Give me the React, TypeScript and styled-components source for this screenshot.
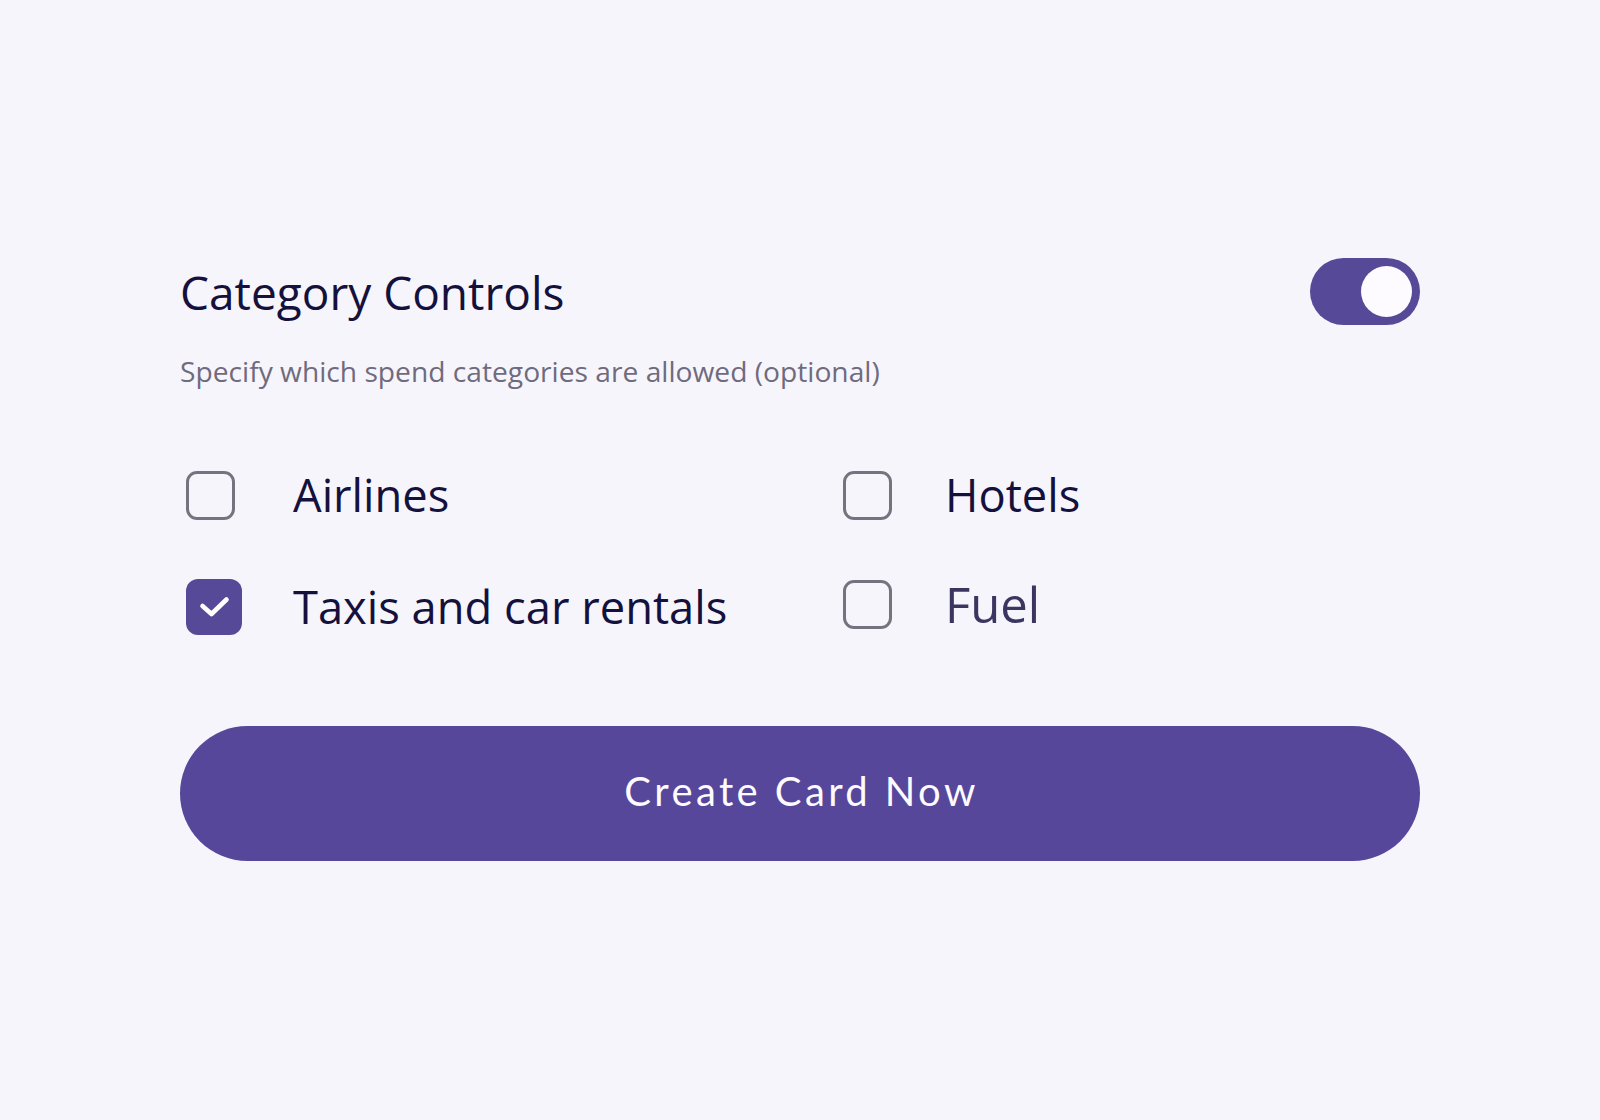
import React, { useState } from "react";
import styled, { createGlobalStyle } from "styled-components";

const GlobalStyle = createGlobalStyle`
  html, body {
    margin: 0;
    padding: 0;
    background: #f7f5fc;
  }
  body {
    font-family: "Open Sans", "Noto Sans", sans-serif;
    -webkit-font-smoothing: antialiased;
  }
  * { box-sizing: border-box; }
`;

const Page = styled.div`
  width: 1600px;
  height: 1120px;
  background: #f7f5fc;
`;

const Panel = styled.main`
  width: 1240px;
  margin: 0 auto;
  padding-top: 258px;
  display: flex;
  flex-direction: column;
`;

const Header = styled.div`
  display: flex;
  align-items: center;
  justify-content: space-between;
  height: 67px;
`;

const Title = styled.h1`
  margin: 0;
  font-family: "Open Sans", sans-serif;
  font-weight: 400;
  font-size: 46px;
  line-height: 62px;
  color: #15113d;
`;

const Toggle = styled.button<{ $on: boolean }>`
  width: 110px;
  height: 67px;
  border: none;
  border-radius: 34px;
  padding: 8px;
  background: ${(p) => (p.$on ? "#564a98" : "#c9c5d6")};
  display: flex;
  align-items: center;
  justify-content: ${(p) => (p.$on ? "flex-end" : "flex-start")};
  cursor: pointer;
`;

const Knob = styled.span`
  width: 51px;
  height: 51px;
  border-radius: 50%;
  background: #fdfbff;
`;

const Subtitle = styled.p`
  margin: 27px 0 0;
  font-family: "Open Sans", sans-serif;
  font-size: 28.2px;
  line-height: 38px;
  color: #6f6b7e;
`;

const Options = styled.div`
  margin-top: 74px;
  padding-left: 6px;
  display: grid;
  grid-template-columns: 657px 1fr;
  row-gap: 50px;
`;

const Option = styled.label<{ $gap: number; $lift: number }>`
  display: grid;
  grid-template-columns: 56px auto;
  column-gap: ${(p) => p.$gap}px;
  align-items: center;
  justify-items: start;
  height: 62px;
  margin-top: ${(p) => -p.$lift}px;
  cursor: pointer;
`;

const Box = styled.span<{ $checked: boolean }>`
  width: ${(p) => (p.$checked ? 56 : 49)}px;
  height: ${(p) => (p.$checked ? 56 : 49)}px;
  border-radius: ${(p) => (p.$checked ? 12 : 11)}px;
  border: ${(p) => (p.$checked ? "none" : "3px solid #77727f")};
  background: ${(p) => (p.$checked ? "#564a98" : "transparent")};
  display: flex;
  align-items: center;
  justify-content: center;
`;

const Label = styled.span<{ $muted?: boolean }>`
  font-family: "Open Sans", sans-serif;
  font-size: ${(p) => (p.$muted ? 49 : 45.3)}px;
  line-height: 62px;
  color: ${(p) => (p.$muted ? "#3b3660" : "#15113d")};
  white-space: nowrap;
`;

const CreateButton = styled.button`
  margin-top: 88px;
  width: 1240px;
  height: 135px;
  border: none;
  border-radius: 68px;
  background: #56479a;
  color: #fdfbff;
  font-family: "Lato", sans-serif;
  font-weight: 400;
  font-size: 40px;
  letter-spacing: 3.4px;
  padding: 0 0 6px 3px;
  cursor: pointer;
`;

const Check = () => (
  <svg width="56" height="56" viewBox="0 0 56 56" fill="none">
    <polyline
      points="16.5,27 25.5,35 40.5,20.5"
      stroke="#ffffff"
      strokeWidth="4.6"
      strokeLinecap="round"
      strokeLinejoin="round"
    />
  </svg>
);

type Item = { label: string; checked: boolean; gap: number; lift: number; muted?: boolean };

const items: Item[] = [
  { label: "Airlines", checked: false, gap: 51, lift: 0 },
  { label: "Hotels", checked: false, gap: 46, lift: 0 },
  { label: "Taxis and car rentals", checked: true, gap: 51, lift: 0 },
  { label: "Fuel", checked: false, gap: 46, lift: 3, muted: true },
];

export default function App() {
  const [on, setOn] = useState(true);
  const [checked, setChecked] = useState(items.map((i) => i.checked));
  return (
    <Page>
      <GlobalStyle />
      <Panel>
        <Header>
          <Title>Category Controls</Title>
          <Toggle $on={on} onClick={() => setOn(!on)} aria-label="Toggle category controls">
            <Knob />
          </Toggle>
        </Header>
        <Subtitle>Specify which spend categories are allowed (optional)</Subtitle>
        <Options>
          {items.map((it, i) => (
            <Option
              key={it.label}
              $gap={it.gap}
              $lift={it.lift}
              onClick={() => setChecked(checked.map((c, j) => (j === i ? !c : c)))}
            >
              <Box $checked={checked[i]}>{checked[i] && <Check />}</Box>
              <Label $muted={it.muted}>{it.label}</Label>
            </Option>
          ))}
        </Options>
        <CreateButton>Create Card Now</CreateButton>
      </Panel>
    </Page>
  );
}
